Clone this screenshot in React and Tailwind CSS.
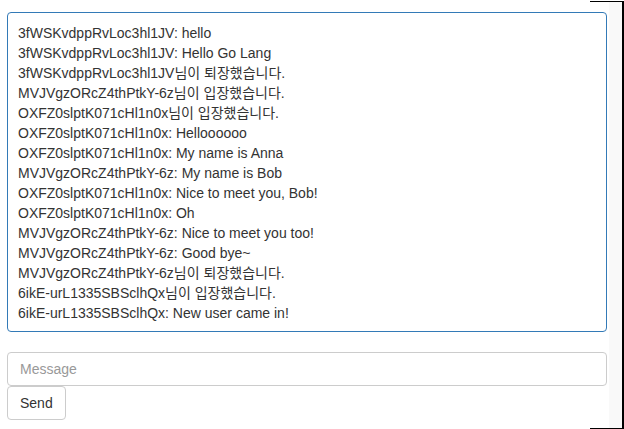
import { useState } from 'react';

const messages = [
  '3fWSKvdppRvLoc3hl1JV: hello',
  '3fWSKvdppRvLoc3hl1JV: Hello Go Lang',
  '3fWSKvdppRvLoc3hl1JV님이 퇴장했습니다.',
  'MVJVgzORcZ4thPtkY-6z님이 입장했습니다.',
  'OXFZ0slptK071cHl1n0x님이 입장했습니다.',
  'OXFZ0slptK071cHl1n0x: Helloooooo',
  'OXFZ0slptK071cHl1n0x: My name is Anna',
  'MVJVgzORcZ4thPtkY-6z: My name is Bob',
  'OXFZ0slptK071cHl1n0x: Nice to meet you, Bob!',
  'OXFZ0slptK071cHl1n0x: Oh',
  'MVJVgzORcZ4thPtkY-6z: Nice to meet you too!',
  'MVJVgzORcZ4thPtkY-6z: Good bye~',
  'MVJVgzORcZ4thPtkY-6z님이 퇴장했습니다.',
  '6ikE-urL1335SBSclhQx님이 입장했습니다.',
  '6ikE-urL1335SBSclhQx: New user came in!',
];

export default function App() {
  const [text, setText] = useState('');

  return (
    <div
      className="relative w-[624px] h-[429px] bg-white text-[14px] text-[#333] overflow-hidden"
      style={{ fontFamily: '"Liberation Sans", "Noto Sans CJK KR", sans-serif' }}
    >
      {/* frame edge on the right */}
      <div className="absolute top-[1px] right-0 w-[34px] h-[428px] border-t border-b border-r-2 border-black">
        <div className="absolute top-0 bottom-0 right-0 w-[13px] bg-[#f9f9f9]" />
      </div>

      <div className="pt-[12px] pl-[7px] w-[607px]">
        {/* Chat log */}
        <div className="h-[320px] border border-[#337ab7] rounded-[4px] px-[10px] pt-[10px] leading-[20px] overflow-hidden">
          {messages.map((m, i) => (
            <div key={i}>{m}</div>
          ))}
        </div>

        {/* Composer */}
        <div className="mt-[20px]">
          <input
            value={text}
            onChange={(e) => setText(e.target.value)}
            placeholder="Message"
            className="block w-full h-[34px] px-[12px] border border-[#ccc] rounded-[4px] text-[14px] text-[#555] placeholder:text-[#999] outline-none"
          />
          <button className="h-[34px] px-[12px] border border-[#ccc] rounded-[4px] bg-white text-[14px] text-[#333]">
            Send
          </button>
        </div>
      </div>
    </div>
  );
}
